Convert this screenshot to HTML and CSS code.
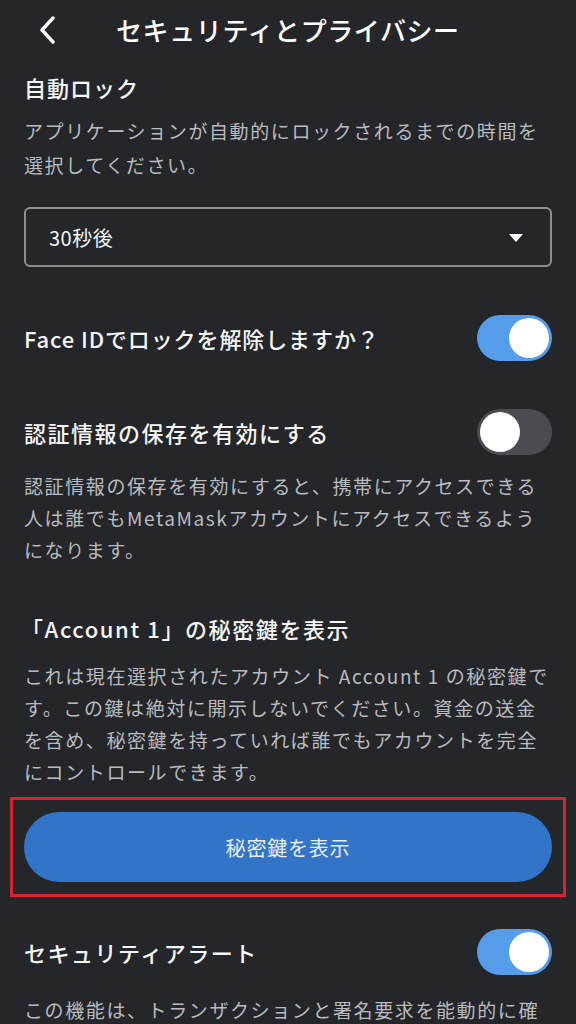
FILE: index.html
```html
<!DOCTYPE html>
<html lang="ja">
<head>
<meta charset="utf-8">
<link rel="stylesheet" href="styles.css">
</head>
<body>
<div class="screen">
  <header class="topbar">
    <span class="back">
      <svg width="18" height="28" viewBox="0 0 18 28"><path d="M14 2 L3 14 L14 26" fill="none" stroke="#ffffff" stroke-width="3.4" stroke-linecap="round" stroke-linejoin="round"/></svg>
    </span>
    <h1 class="title">セキュリティとプライバシー</h1>
  </header>
  <main class="content">
    <h2 class="heading first">自動ロック</h2>
    <p class="desc tall">アプリケーションが自動的にロックされるまでの時間を<br>選択してください。</p>
    <div class="select">
      <span class="select-value">30秒後</span>
      <svg class="caret" width="14" height="8" viewBox="0 0 14 8"><path d="M0 0 H14 L7 8 Z" fill="#ffffff"/></svg>
    </div>

    <div class="row row-face">
      <span class="row-label face-label">Face IDでロックを解除しますか？</span>
      <span class="toggle on"><span class="knob"></span></span>
    </div>
    <div class="row row-cred">
      <span class="row-label">認証情報の保存を有効にする</span>
      <span class="toggle off"><span class="knob"></span></span>
    </div>
    <p class="desc d-cred">認証情報の保存を有効にすると、携帯にアクセスできる<br>人は誰でもMetaMaskアカウントにアクセスできるよう<br>になります。</p>

    <h2 class="heading account">「Account 1」の秘密鍵を表示</h2>
    <p class="desc d-account">これは現在選択されたアカウント Account 1 の秘密鍵で<br>す。この鍵は絶対に開示しないでください。資金の送金<br>を含め、秘密鍵を持っていれば誰でもアカウントを完全<br>にコントロールできます。</p>

    <div class="highlight">
      <button class="primary">秘密鍵を表示</button>
    </div>

    <div class="row row-alert">
      <span class="row-label">セキュリティアラート</span>
      <span class="toggle on"><span class="knob"></span></span>
    </div>
    <p class="desc d-alert">この機能は、トランザクションと署名要求を能動的に確</p>
  </main>
</div>
</body>
</html>
```

FILE: styles.css
```css
html, body {
  margin: 0;
  padding: 0;
  background: #24262a;
}
body {
  font-family: "Noto Sans CJK JP", "Noto Sans", sans-serif;
  color: #f3f4f5;
  width: 576px;
  height: 1024px;
  overflow: hidden;
}
.screen {
  display: flex;
  flex-direction: column;
}
.topbar {
  height: 60px;
  display: flex;
  align-items: center;
  padding-left: 39px;
}
.back {
  display: flex;
  width: 18px;
  height: 28px;
}
.title {
  margin: 0 0 0 59px;
  font-size: 26px;
  font-weight: 500;
  letter-spacing: 0.6px;
  line-height: 34px;
  color: #ffffff;
}
.content {
  padding: 0 24px;
  display: flex;
  flex-direction: column;
}
.heading {
  margin: 0;
  font-size: 22px;
  font-weight: 500;
  line-height: 34px;
  letter-spacing: 1px;
  color: #f5f6f7;
}
.heading.first { margin-top: 10px; }
.heading.account {
  margin-top: 45px;
  margin-left: -3px;
  letter-spacing: 1.6px;
}
.desc {
  margin: 0;
  font-size: 19px;
  line-height: 32px;
  letter-spacing: 1.6px;
  color: #b9bbbe;
  white-space: nowrap;
}
.desc.tall {
  margin-top: 10px;
  line-height: 34px;
}
.select {
  margin-top: 25px;
  height: 60px;
  box-sizing: border-box;
  border: 2px solid #8b8e93;
  border-radius: 6px;
  display: flex;
  align-items: center;
  justify-content: space-between;
  padding: 0 27px 0 23px;
}
.select-value {
  font-size: 20px;
  letter-spacing: 0.5px;
  color: #f3f4f5;
}
.caret { margin-top: 1px; }
.row {
  display: flex;
  align-items: center;
  justify-content: space-between;
  height: 46px;
}
.row-label {
  font-size: 22px;
  font-weight: 500;
  letter-spacing: 1.5px;
  color: #f5f6f7;
}
.face-label { letter-spacing: 0.9px; }
.row-face { margin-top: 48px; }
.row-cred { margin-top: 48px; }
.row-alert { margin-top: 32px; }
.toggle {
  width: 75px;
  height: 46px;
  border-radius: 23px;
  box-sizing: border-box;
  padding: 3px;
  display: flex;
  align-items: center;
}
.toggle.on {
  background: #559ceb;
  justify-content: flex-end;
}
.toggle.off {
  background: #4a4c51;
  justify-content: flex-start;
}
.knob {
  width: 40px;
  height: 40px;
  border-radius: 50%;
  background: #ffffff;
}
.d-cred { margin-top: 15px; }
.d-account { margin-top: 15px; }
.d-alert { margin-top: 19px; }
.highlight {
  margin: 9px -14px 0;
  border: 3px solid #dc222e;
  padding: 12px 11px;
}
.primary {
  display: block;
  width: 100%;
  height: 70px;
  border: none;
  border-radius: 35px;
  background: #3275c8;
  color: #e8eef7;
  font-family: "Noto Sans CJK JP", sans-serif;
  font-size: 20px;
  letter-spacing: 0.8px;
}
```
